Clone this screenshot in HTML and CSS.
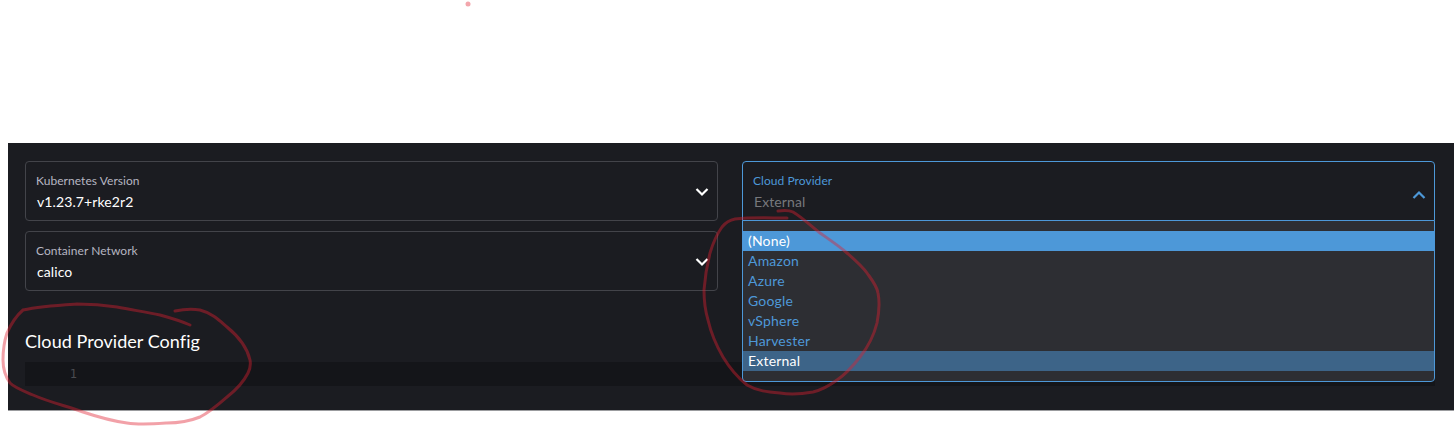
FILE: index.html
```html
<!DOCTYPE html>
<html lang="en">

<head>
    <meta charset="UTF-8">
    <meta name="viewport" content="width=device-width, initial-scale=1.0">
    <title>Cluster Configuration</title>
    <link rel="stylesheet" href="styles.css">
</head>

<body>
    <div class="panel">
        <div class="field-grid">
            <div class="field">
                <div class="field-label">Kubernetes Version</div>
                <div class="field-value">v1.23.7+rke2r2</div>
                <svg class="chevron" width="14" height="10" viewBox="0 0 14 10">
                    <path d="M1.5 2 L7 7.5 L12.5 2" />
                </svg>
            </div>
            <div class="field field-open">
                <div class="field-label">Cloud Provider</div>
                <div class="field-value">External</div>
                <svg class="chevron" width="14" height="10" viewBox="0 0 14 10">
                    <path d="M1.5 8 L7 2.5 L12.5 8" />
                </svg>
                <ul class="dropdown">
                    <li class="option option-highlight">(None)</li>
                    <li class="option">Amazon</li>
                    <li class="option">Azure</li>
                    <li class="option">Google</li>
                    <li class="option">vSphere</li>
                    <li class="option">Harvester</li>
                    <li class="option option-selected">External</li>
                </ul>
            </div>
            <div class="field">
                <div class="field-label">Container Network</div>
                <div class="field-value">calico</div>
                <svg class="chevron" width="14" height="10" viewBox="0 0 14 10">
                    <path d="M1.5 2 L7 7.5 L12.5 2" />
                </svg>
            </div>
        </div>

        <h3 class="section-title">Cloud Provider Config</h3>
        <div class="editor">
            <span class="line-number">1</span>
        </div>
    </div>

    <!-- Hand drawn marks on top of the screenshot -->
    <svg class="scribble" width="1454" height="426" viewBox="0 0 1454 426">
        <circle class="dot" cx="468" cy="4" r="2.5" />
        <path class="mark" d="M175 311 C185 309 193 309 200 310 C212 313 220 321 227 327 C238 336 247 347 250 360 C251 365 250 369 248 373 C243 383 236 390 227 397 C219 404 210 412 200 417 C190 421 179 423 167 423 C153 424 140 425 127 423 C112 421 98 417 83 412 C66 406 49 402 33 395 C24 391 15 388 10 383 C5 376 3 368 3 360 C3 350 4 342 7 333 C11 324 16 316 23 310 C40 306 60 305 77 304 C91 304 104 305 117 307 C132 310 146 312 160 315 C171 318 181 321 190 325" />
        <path class="mark" d="M778 211 C784 210 789 210 793 212 C803 218 812 227 820 233 C830 240 839 246 847 253 C855 260 862 266 867 273 C872 280 877 286 878 293 C880 303 879 313 877 323 C874 335 868 347 860 357 C853 366 846 374 837 380 C829 386 821 390 813 392 C802 394 791 395 780 393 C768 392 757 391 747 385 C737 377 729 367 723 357 C716 345 711 333 708 320 C705 310 704 300 704 290 C705 277 707 265 710 253 C713 243 717 234 722 227 C726 222 730 220 735 219 C752 217 770 218 787 218" />
    </svg>
</body>

</html>
```

FILE: styles.css
```css
body {
    margin: 0;
    height: 426px;
    overflow: hidden;
    position: relative;
    background-color: #fff;
    font-family: Lato, "Open Sans", sans-serif;
}

.panel {
    box-sizing: border-box;
    height: 268px;
    margin: 143px 0 0 8px;
    padding: 18px 19px 0 17px;
    background: #1b1c21;
    border-bottom: 1px solid #9b9c9f;
}

.field-grid {
    display: grid;
    grid-template-columns: 1fr 1fr;
    grid-auto-rows: 60px;
    column-gap: 24px;
    row-gap: 10px;
}

.field {
    position: relative;
    box-sizing: border-box;
    padding: 11px 10px 0;
    border: 1px solid #43444a;
    border-radius: 4px;
}

.field-label {
    font-size: 12px;
    line-height: 16px;
    letter-spacing: 0.05px;
    color: #b6b6c2;
}

.field-value {
    margin-top: 4px;
    padding-left: 1px;
    font-size: 14px;
    line-height: 18px;
    letter-spacing: 0.1px;
    color: #fff;
}

.chevron {
    position: absolute;
    top: 25px;
    right: 8px;
}

.chevron path {
    fill: none;
    stroke: #fff;
    stroke-width: 2.2;
}

.field-open {
    border-color: #4d98d8;
    border-bottom-left-radius: 0;
    border-bottom-right-radius: 0;
}

.field-open .field-label {
    color: #4d98d8;
}

.field-open .field-value {
    color: #77787c;
}

.field-open .chevron {
    top: 28px;
    right: 8px;
}

.field-open .chevron path {
    stroke: #4d98d8;
}

.dropdown {
    position: absolute;
    z-index: 2;
    top: 58px;
    left: -1px;
    right: -1px;
    margin: 0;
    padding: 10px 0;
    list-style: none;
    background: #2d2e33;
    border: 1px solid #4d98d8;
    border-radius: 0 0 4px 4px;
}

.option {
    height: 20px;
    padding-left: 5px;
    font-size: 14px;
    line-height: 20px;
    letter-spacing: 0.2px;
    color: #4d98d8;
}

.option-highlight {
    background: #4d98d8;
    color: #fff;
}

.option-selected {
    background: #3d6488;
    color: #fff;
}

.section-title {
    margin: 40px 0 10px;
    font-size: 18px;
    font-weight: 400;
    line-height: 21px;
    letter-spacing: 0.05px;
    color: #fff;
}

.editor {
    height: 24px;
    background: #141519;
}

.line-number {
    display: block;
    width: 52px;
    text-align: right;
    font-family: "DejaVu Sans Mono", monospace;
    font-size: 12px;
    line-height: 24px;
    color: #4a4b50;
}

.scribble {
    position: absolute;
    top: 0;
    left: 0;
    z-index: 3;
    pointer-events: none;
}

.mark {
    fill: none;
    stroke: #e02030;
    stroke-width: 3;
    stroke-linecap: round;
    opacity: 0.42;
}

.dot {
    fill: #e02030;
    opacity: 0.4;
}
```
